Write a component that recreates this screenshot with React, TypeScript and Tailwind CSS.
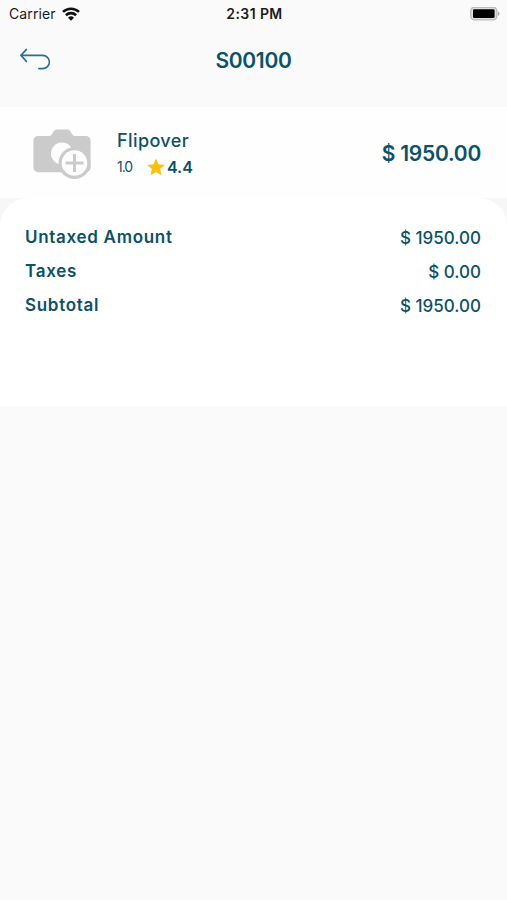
type AmountLine = { label: string; amount: string };

const LINES: AmountLine[] = [
  { label: "Untaxed Amount", amount: "$ 1950.00" },
  { label: "Taxes", amount: "$ 0.00" },
  { label: "Subtotal", amount: "$ 1950.00" },
];

export default function App() {
  return (
    <div className="min-h-screen bg-[#fafafa] font-['Inter',sans-serif] text-[#0b5268]">
      <StatusBar />
      <Header title="S00100" />
      <ProductRow />
      <Totals lines={LINES} />
    </div>
  );
}

function StatusBar() {
  return (
    <div className="grid h-7 grid-cols-3 items-center pl-[9px] pr-[7px] text-[#1c1c1c]">
      <div className="flex items-center gap-[6px]">
        <span className="text-[14px] leading-none tracking-[0.1px]">Carrier</span>
        <WifiIcon />
      </div>
      <span className="text-center text-[14px] font-semibold leading-none tracking-[0.4px]">2:31 PM</span>
      <div className="flex justify-end">
        <BatteryIcon />
      </div>
    </div>
  );
}

function Header({ title }: { title: string }) {
  return (
    <header className="grid h-[79px] grid-cols-3 px-5 pt-5">
      <button className="h-[26px] w-[32px]" aria-label="Back">
        <BackIcon />
      </button>
      <h1 className="text-center text-[21px] font-semibold leading-[26px] tracking-[-0.3px]">{title}</h1>
    </header>
  );
}

function ProductRow() {
  return (
    <section className="flex h-[91px] items-center bg-[#fefefe] pl-[33px] pr-[26px] pt-[2px]">
      <CameraIcon />
      <div className="ml-[26px] flex-1">
        <p className="text-[18px] font-medium leading-[26px] tracking-[0.4px]">Flipover</p>
        <div className="flex h-[26px] items-center">
          <span className="w-[30px] text-[14px] tracking-[-1px]">1.0</span>
          <StarIcon />
          <span className="ml-[2px] text-[16px] font-semibold">4.4</span>
        </div>
      </div>
      <p className="text-[21px] font-semibold tracking-[-0.25px]">$ 1950.00</p>
    </section>
  );
}

function Totals({ lines }: { lines: AmountLine[] }) {
  return (
    <section className="bg-[#f7f7f7]">
      <div className="flex h-[208px] flex-col rounded-t-[28px] bg-white pl-[25px] pr-[26px] pt-[23px]">
        {lines.map((line) => (
          <div key={line.label} className="flex h-[34px] items-center justify-between text-[17px]">
            <span className="font-semibold tracking-[0.7px]">{line.label}</span>
            <span className="pt-px font-medium">{line.amount}</span>
          </div>
        ))}
      </div>
    </section>
  );
}

function WifiIcon() {
  return (
    <svg className="h-[14px] w-[18px]" viewBox="0 0 18 14" fill="none" stroke="#111" strokeWidth="2.6">
      <path d="M1 4.900a11.600 11.600 0 0 1 16 0" />
      <path d="M3.900 8.200a7.400 7.400 0 0 1 10.200 0" />
      <path d="M9 13.800 6 10.700a4.300 4.300 0 0 1 6 0Z" fill="#111" stroke="none" />
    </svg>
  );
}

function BatteryIcon() {
  return (
    <svg className="h-[14px] w-[30px]" viewBox="0 0 30 14">
      <rect x="0.8" y="0.3" width="26" height="12.6" rx="3.6" fill="#dedede" stroke="#bcbcbc" strokeWidth="1.4" />
      <rect x="3" y="2.3" width="21.6" height="8.600" rx="1.2" fill="#000" />
      <path d="M28 4.400c2 .7 2 3.700 0 4.400Z" fill="#a8a8a8" />
    </svg>
  );
}

function BackIcon() {
  return (
    <svg className="h-[26px] w-[32px]" viewBox="0 0 32 26" fill="none" stroke="#27738b" strokeWidth="1.6" strokeLinecap="round" strokeLinejoin="round">
      <path d="M6.400 1.400 1 7.400l5.400 6" />
      <path d="M1.200 7.400h21.600a6.600 6.600 0 0 1 0 13.200h-4" />
    </svg>
  );
}

function StarIcon() {
  return (
    <svg className="h-[18px] w-[18px]" viewBox="0 0 18 18" fill="#fdc00f">
      <path d="m9 .4 2.500 5.900 6.300.6-4.700 4.200 1.400 6.200L9 14l-5.500 3.300 1.400-6.200L.2 6.900l6.300-.6Z" />
    </svg>
  );
}

function CameraIcon() {
  return (
    <svg className="h-[50px] w-[58px]" viewBox="0 0 58 50">
      <path
        d="M5 7h10.500c1.600 0 2.600-.5 3.600-2L20.600 2.400C21.500.9 22.500.4 24 .4h10c1.500 0 2.500.5 3.400 2L39 5c1 1.500 2 2 3.600 2H53a4.600 4.600 0 0 1 4.600 4.600v27A4.600 4.600 0 0 1 53 43.200H5A4.600 4.600 0 0 1 .4 38.600v-27A4.600 4.600 0 0 1 5 7Z"
        fill="#cbcbcb"
      />
      <circle cx="29" cy="24.500" r="11" fill="#fefefe" />
      <circle cx="41.500" cy="34" r="16" fill="#cbcbcb" />
      <circle cx="41.500" cy="34" r="12.800" fill="#fefefe" />
      <path d="M41.500 25v18M32.500 34h18" stroke="#cbcbcb" strokeWidth="3" />
    </svg>
  );
}
